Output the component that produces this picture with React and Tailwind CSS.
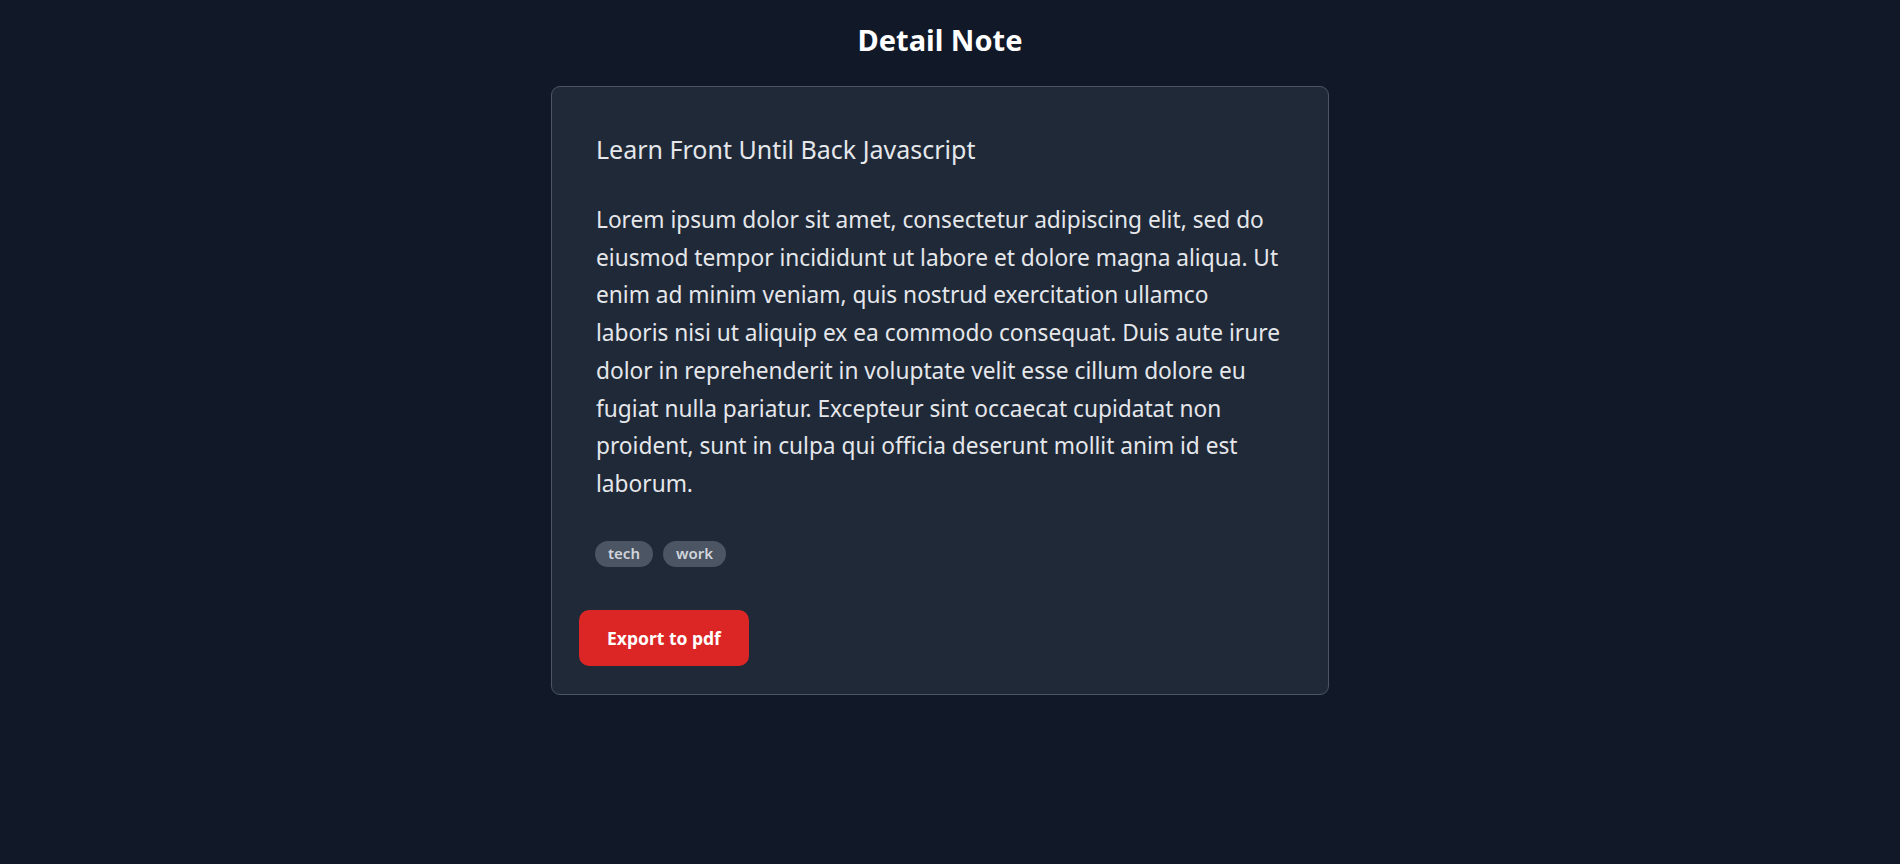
const NOTE = {
  title: 'Learn Front Until Back Javascript',
  body:
    'Lorem ipsum dolor sit amet, consectetur adipiscing elit, sed do eiusmod tempor incididunt ut labore et dolore magna aliqua. Ut enim ad minim veniam, quis nostrud exercitation ullamco laboris nisi ut aliquip ex ea commodo consequat. Duis aute irure dolor in reprehenderit in voluptate velit esse cillum dolore eu fugiat nulla pariatur. Excepteur sint occaecat cupidatat non proident, sunt in culpa qui officia deserunt mollit anim id est laborum.',
  tags: ['tech', 'work'],
};

const DetailNote = () => {
  return (
    <div className="min-h-screen w-full bg-[#111827] font-['Noto_Sans',sans-serif]">
      <div className="flex w-[1880px] flex-col items-center pt-[22px]">
        <h1 className="mb-[28px] text-[29px] font-bold leading-[36px] text-white">Detail Note</h1>

        {/* Card */}
        <div className="w-[778px] rounded-[9px] border border-[#4b5563] bg-[#1f2937] p-[27px] pb-[28px]">
          <div className="p-[18px] pl-[17px]">
            <h2 className="text-[25px] leading-[34px] text-[#e5e7eb]">{NOTE.title}</h2>
            <p className="mt-[35px] text-[22.7px] leading-[37.7px] text-[#e5e7eb]">{NOTE.body}</p>
            <div className="-ml-[1px] mt-[38px] flex gap-[10px]">
              {NOTE.tags.map(tag => (
                <span
                  key={tag}
                  className="flex h-[26px] items-center rounded-full bg-[#4b5563] px-[13px] text-[15px] font-semibold text-[#d1d5db]"
                >
                  {tag}
                </span>
              ))}
            </div>
          </div>

          <button
            type="button"
            className="mt-[25px] flex h-[56px] items-center rounded-[10px] bg-[#dc2626] px-[28px] text-[17.5px] font-bold text-white"
          >
            Export to pdf
          </button>
        </div>
      </div>
    </div>
  );
};

export default function App() {
  return <DetailNote />;
}
